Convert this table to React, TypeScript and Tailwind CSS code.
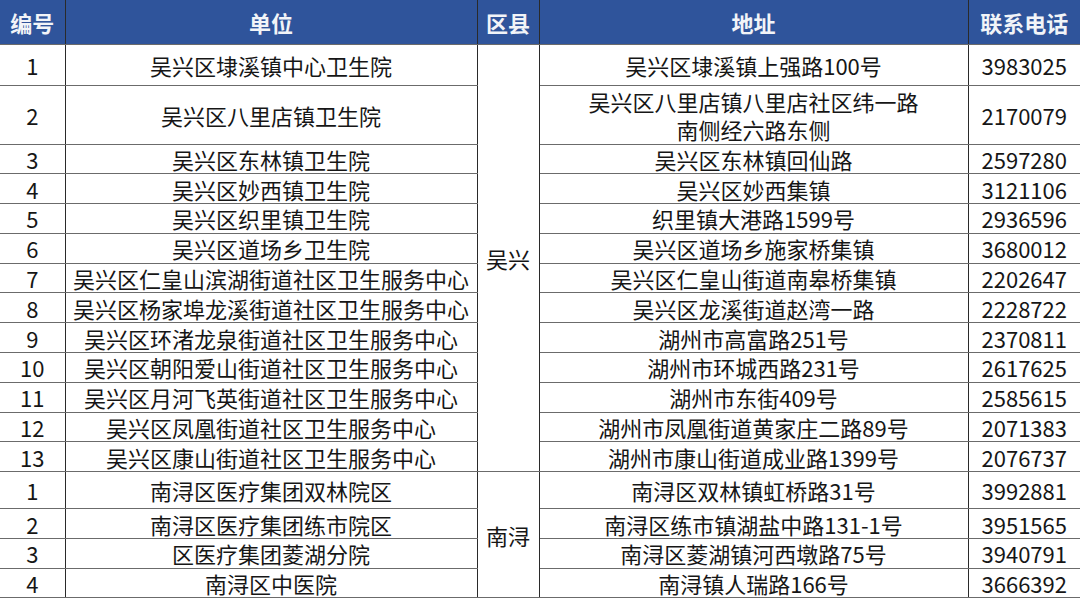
const wuxing: [string, string, string, string, string][] = [
  ["1", "吴兴区埭溪镇中心卫生院", "吴兴区埭溪镇上强路100号", "3983025", "h-[41px]"],
  ["2", "吴兴区八里店镇卫生院", "吴兴区八里店镇八里店社区纬一路\n南侧经六路东侧", "2170079", "h-[59px]"],
  ["3", "吴兴区东林镇卫生院", "吴兴区东林镇回仙路", "2597280", "h-[29.8px]"],
  ["4", "吴兴区妙西镇卫生院", "吴兴区妙西集镇", "3121106", "h-[29.8px]"],
  ["5", "吴兴区织里镇卫生院", "织里镇大港路1599号", "2936596", "h-[29.8px]"],
  ["6", "吴兴区道场乡卫生院", "吴兴区道场乡施家桥集镇", "3680012", "h-[29.8px]"],
  ["7", "吴兴区仁皇山滨湖街道社区卫生服务中心", "吴兴区仁皇山街道南皋桥集镇", "2202647", "h-[29.8px]"],
  ["8", "吴兴区杨家埠龙溪街道社区卫生服务中心", "吴兴区龙溪街道赵湾一路", "2228722", "h-[29.8px]"],
  ["9", "吴兴区环渚龙泉街道社区卫生服务中心", "湖州市高富路251号", "2370811", "h-[29.8px]"],
  ["10", "吴兴区朝阳爱山街道社区卫生服务中心", "湖州市环城西路231号", "2617625", "h-[29.8px]"],
  ["11", "吴兴区月河飞英街道社区卫生服务中心", "湖州市东街409号", "2585615", "h-[29.8px]"],
  ["12", "吴兴区凤凰街道社区卫生服务中心", "湖州市凤凰街道黄家庄二路89号", "2071383", "h-[29.8px]"],
  ["13", "吴兴区康山街道社区卫生服务中心", "湖州市康山街道成业路1399号", "2076737", "h-[29.8px]"],
];

const nanxun: [string, string, string, string, string][] = [
  ["1", "南浔区医疗集团双林院区", "南浔区双林镇虹桥路31号", "3992881", "h-[37px]"],
  ["2", "南浔区医疗集团练市院区", "南浔区练市镇湖盐中路131-1号", "3951565", "h-[29.7px]"],
  ["3", "区医疗集团菱湖分院", "南浔区菱湖镇河西墩路75号", "3940791", "h-[29.7px]"],
  ["4", "南浔区中医院", "南浔镇人瑞路166号", "3666392", "h-[29.7px]"],
];

const cell = "border-b border-r border-b-[#6b6b6b] border-r-[#2a2a2a] p-0 text-center align-middle";

function Rows({ data, county }: { data: [string, string, string, string, string][]; county: string }) {
  return (
    <>
      {data.map(([no, name, addr, tel, h], i) => (
        <tr key={no} className={h}>
          <td className={cell}>{no}</td>
          <td className={cell}>{name}</td>
          {i === 0 && (
            <td rowSpan={data.length} className={cell}>
              {county}
            </td>
          )}
          <td className={`${cell} whitespace-pre-line ${addr.includes("\n") ? "leading-[28px]" : ""}`}>{addr}</td>
          <td className={`${cell} border-r-0`}>{tel}</td>
        </tr>
      ))}
    </>
  );
}

export default function App() {
  return (
    <div className="h-[599px] w-[1080px] overflow-hidden bg-white font-['Noto_Sans_CJK_SC','Noto_Sans',sans-serif] text-[22px] leading-[24px] text-[#161616]">
      <table className="w-[1080px] table-fixed border-collapse">
        <colgroup>
          <col className="w-[65px]" />
          <col className="w-[412px]" />
          <col className="w-[62px]" />
          <col className="w-[429px]" />
          <col className="w-[112px]" />
        </colgroup>
        <thead>
          <tr className="h-[44px] bg-[#2f549b] font-bold text-[#f2f4f8]">
            <th className={`${cell} border-b-[#2a2a2a]`}>编号</th>
            <th className={`${cell} border-b-[#2a2a2a]`}>单位</th>
            <th className={`${cell} border-b-[#2a2a2a]`}>区县</th>
            <th className={`${cell} border-b-[#2a2a2a]`}>地址</th>
            <th className={`${cell} border-b-[#2a2a2a] border-r-0`}>联系电话</th>
          </tr>
        </thead>
        <tbody>
          <Rows data={wuxing} county="吴兴" />
          <Rows data={nanxun} county="南浔" />
        </tbody>
      </table>
    </div>
  );
}
